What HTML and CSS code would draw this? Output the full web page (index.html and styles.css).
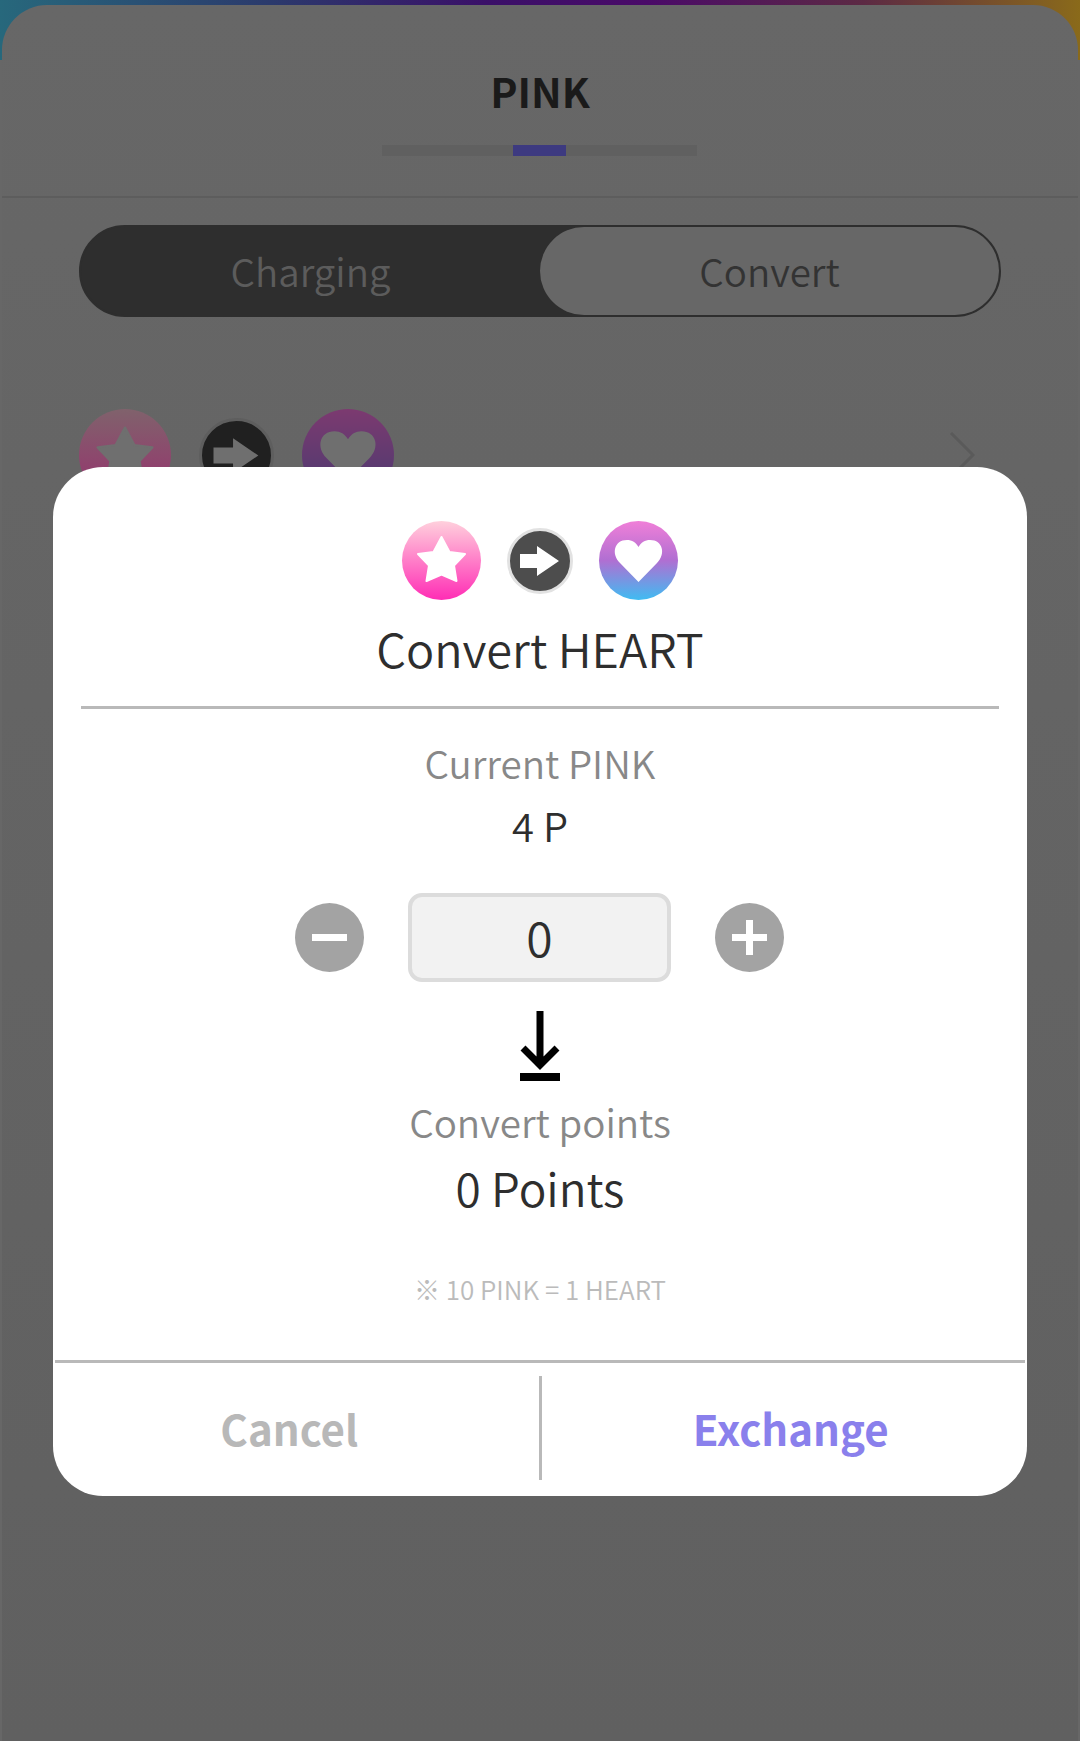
FILE: index.html
```html
<!DOCTYPE html>
<html lang="en">
<head>
    <meta charset="UTF-8">
    <meta name="viewport" content="width=device-width, initial-scale=1.0">
    <title>PINK</title>
    <link rel="stylesheet" href="styles.css">
</head>
<body>
    <svg class="sprite" aria-hidden="true">
        <symbol id="star" viewBox="0 0 79 79">
            <polygon points="39.5,16 47.5,31 63,33 52,44.5 54.5,60 39.5,53.5 24.5,60 27,44.5 16,33 31.5,31" stroke="currentColor" stroke-width="2" stroke-linejoin="round"/>
        </symbol>
        <symbol id="heart" viewBox="0 0 79 79">
            <path d="M39.5 61 L21 42 C12 33 15 19 28 19 C33 19 37 21.500 39.5 26 C42 21.500 46 19 51 19 C64 19 67 33 58 42 Z"/>
        </symbol>
        <symbol id="arrow" viewBox="0 0 60 60">
            <polygon points="10,23 27,23 27,15 49,30 27,45 27,37 10,37"/>
        </symbol>
    </svg>

    <div class="page">
        <div class="sheet">
            <header class="sheet-head">
                <h1>PINK</h1>
                <div class="progress"><span class="progress-thumb"></span></div>
            </header>

            <div class="tabs">
                <div class="tab tab-off">Charging</div>
                <div class="tab tab-on">Convert</div>
            </div>

            <div class="convert-row">
                <span class="coin coin-lg dim-star"><svg><use href="#star"/></svg></span>
                <span class="coin-arrow dim-arrow"><svg><use href="#arrow"/></svg></span>
                <span class="coin coin-lg dim-heart"><svg><use href="#heart"/></svg></span>
                <svg class="chevron" viewBox="0 0 26 48"><polyline points="2,2 24,24 2,46"/></svg>
            </div>
        </div>
    </div>

    <div class="modal">
        <div class="modal-icons">
            <span class="coin coin-star"><svg><use href="#star"/></svg></span>
            <span class="coin-arrow"><svg><use href="#arrow"/></svg></span>
            <span class="coin coin-heart"><svg><use href="#heart"/></svg></span>
        </div>
        <h2 class="modal-title">Convert HEART</h2>

        <div class="label label-current">Current PINK</div>
        <div class="value">4 P</div>

        <div class="stepper">
            <svg class="step-btn" viewBox="0 0 69 69"><circle cx="34.500" cy="34.500" r="34.500"/><rect x="17" y="31" width="35" height="7"/></svg>
            <div class="step-input">0</div>
            <svg class="step-btn" viewBox="0 0 69 69"><circle cx="34.500" cy="34.500" r="34.500"/><rect x="17" y="31" width="35" height="7"/><rect x="31" y="17" width="7" height="35"/></svg>
        </div>

        <svg class="down-icon" viewBox="0 0 40 70"><path d="M20 0 V54 M3 37 L20 54 L37 37"/><rect x="0" y="62" width="40" height="8"/></svg>

        <div class="label label-points">Convert points</div>
        <div class="points">0 Points</div>
        <div class="note">※ 10 PINK = 1 HEART</div>

        <div class="modal-foot">
            <button class="foot-btn btn-cancel">Cancel</button>
            <span class="foot-sep"></span>
            <button class="foot-btn btn-exchange">Exchange</button>
        </div>
    </div>
</body>
</html>
```

FILE: styles.css
```css
* {
    box-sizing: border-box;
}

body {
    margin: 0;
    height: 1741px;
    position: relative;
    overflow: hidden;
    font-family: "Noto Sans CJK KR", "Noto Sans", sans-serif;
    background: #646464;
    color: #2e2e2e;
}

.sprite {
    display: none;
}

.page {
    height: 100%;
    padding: 5px 2px 0;
    background:
        linear-gradient(90deg, #27687c 0%, #2b3a6c 25%, #3a1068 45%, #4a0a68 60%, #5c2a44 80%, #8a6a1a 100%) top / 100% 60px no-repeat,
        #676767;
}

.sheet {
    height: 100%;
    border-radius: 45px 45px 0 0;
    background: linear-gradient(#676767, #646464 40%, #606060);
}

.sheet-head {
    height: 193px;
    padding-top: 56px;
    border-bottom: 2px solid #5d5d5d;
    text-align: center;
}

h1 {
    margin: 0 0 26px;
    font-size: 41px;
    line-height: 58px;
    font-weight: 700;
    color: #1a1a1a;
}

.progress {
    width: 315px;
    height: 11px;
    margin-left: 380px;
    padding-left: 131px;
    background: #606060;
}

.progress-thumb {
    display: block;
    width: 53px;
    height: 11px;
    background: #3d3a80;
}

.tabs {
    display: flex;
    width: 922px;
    height: 92px;
    margin: 27px 0 0 77px;
    border: 2px solid #2e2e2e;
    border-radius: 46px;
    background: #2e2e2e;
}

.tab {
    flex: 1;
    display: flex;
    align-items: center;
    justify-content: center;
    padding-bottom: 2px;
    font-size: 38.5px;
    font-weight: 350;
}

.tab-off {
    color: #5c5c5c;
}

.tab-on {
    color: #333;
    background: #676767;
    border-radius: 44px;
}

.convert-row {
    display: flex;
    align-items: center;
    gap: 28px;
    margin: 92px 0 0 77px;
    padding-right: 103px;
}

.coin {
    display: flex;
    flex: none;
    width: 79px;
    height: 79px;
    border-radius: 50%;
    color: #fff;
    fill: currentColor;
}

.coin svg {
    width: 100%;
    height: 100%;
}

.coin-lg {
    width: 92px;
    height: 92px;
}

.coin-star {
    background: linear-gradient(#ffd0dc, #ff2db5);
}

.coin-heart {
    background: linear-gradient(#f07fd8 0%, #b06fd2 50%, #3fbcf2 100%);
}

.coin-arrow {
    display: flex;
    flex: none;
    width: 66px;
    height: 66px;
    border: 3px solid #e2e2e2;
    border-radius: 50%;
    background: #4d4d4d;
    fill: #fff;
}

.coin-arrow svg {
    width: 100%;
    height: 100%;
}

.dim-star {
    color: #6f6f6f;
    background: linear-gradient(#80626c, #98306e);
}

.dim-heart {
    color: #6f6f6f;
    background: linear-gradient(#7c3a70, #483a70);
}

.dim-arrow {
    width: 75px;
    height: 75px;
    border-color: #5e5e5e;
    background: #202020;
    fill: #6f6f6f;
}

.chevron {
    width: 26px;
    height: 48px;
    margin-left: auto;
    fill: none;
    stroke: #5a5a5a;
    stroke-width: 3;
}

/* dialog sits on top of the dimmed sheet */
.modal {
    position: absolute;
    top: 467px;
    left: 53px;
    display: flex;
    flex-direction: column;
    align-items: center;
    width: 974px;
    height: 1029px;
    padding-top: 54px;
    border-radius: 50px;
    background: #fff;
}

.modal-icons {
    display: flex;
    align-items: center;
    gap: 26px;
    height: 79px;
}

.modal-title {
    width: 918px;
    height: 109px;
    margin: 0;
    padding-top: 15px;
    border-bottom: 3px solid #b9b9b9;
    text-align: center;
    font-size: 46.9px;
    line-height: 66px;
    font-weight: 350;
}

.label {
    font-size: 38.6px;
    line-height: 56px;
    color: #888;
    font-weight: 350;
}

.label-current {
    margin-top: 25px;
}

.value {
    margin-top: 7px;
    font-size: 40px;
    line-height: 56px;
    font-weight: 350;
}

.stepper {
    display: flex;
    align-items: center;
    gap: 44px;
    margin: 40px 1px 0 0;
}

.step-btn {
    width: 69px;
    height: 69px;
    fill: #a3a3a3;
}

.step-btn rect {
    fill: #fff;
}

.step-input {
    width: 263px;
    height: 89px;
    border: 4px solid #dcdcdc;
    border-radius: 14px;
    background: #f2f2f2;
    text-align: center;
    font-size: 48px;
    line-height: 79px;
    font-weight: 350;
}

.down-icon {
    width: 40px;
    height: 70px;
    margin-top: 29px;
    fill: #000;
    stroke: none;
}

.down-icon path {
    fill: none;
    stroke: #000;
    stroke-width: 7;
}

.label-points {
    margin-top: 12px;
}

.points {
    margin-top: 5px;
    font-size: 46px;
    line-height: 66px;
    font-weight: 350;
}

.note {
    margin-top: 50px;
    font-size: 26px;
    line-height: 38px;
    color: #bbb;
    font-weight: 350;
}

.modal-foot {
    display: flex;
    align-items: center;
    width: 970px;
    height: 136px;
    margin-top: auto;
    padding-bottom: 3px;
    border-top: 3px solid #b9b9b9;
}

.foot-btn {
    flex: 1;
    padding: 0 0 2px;
    border: none;
    background: none;
    font-family: inherit;
    font-size: 42px;
    font-weight: 700;
}

.btn-cancel {
    padding-right: 15px;
    color: #b8b8b8;
}

.btn-exchange {
    padding-left: 15px;
    color: #8a80ec;
}

.foot-sep {
    width: 3px;
    height: 104px;
    background: #b9b9b9;
}
```
